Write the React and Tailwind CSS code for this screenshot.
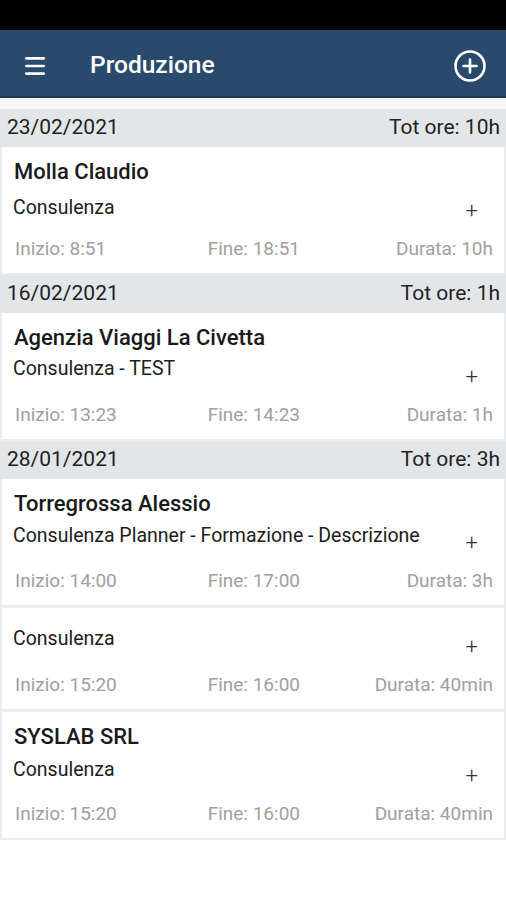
import { Menu } from "lucide-react";

const groups = [
  {
    date: "23/02/2021",
    tot: "10h",
    items: [
      { name: "Molla Claudio", desc: "Consulenza", start: "8:51", end: "18:51", dur: "10h", descGap: "mt-[14px]" },
    ],
  },
  {
    date: "16/02/2021",
    tot: "1h",
    items: [
      { name: "Agenzia Viaggi La Civetta", desc: "Consulenza - TEST", start: "13:23", end: "14:23", dur: "1h", descGap: "mt-[9px]" },
    ],
  },
  {
    date: "28/01/2021",
    tot: "3h",
    items: [
      { name: "Torregrossa Alessio", desc: "Consulenza Planner - Formazione - Descrizione", start: "14:00", end: "17:00", dur: "3h", descGap: "mt-[10px]" },
      { name: "", desc: "Consulenza", start: "15:20", end: "16:00", dur: "40min", descGap: "mt-[9px]" },
      { name: "SYSLAB SRL", desc: "Consulenza", start: "15:20", end: "16:00", dur: "40min", descGap: "mt-[11px]" },
    ],
  },
];

const Card = ({ item }) => (
  <div className="bg-white mx-[2px] pl-[12px] pr-[11px] pt-[12px] pb-[2px]">
    {item.name && (
      <div className="h-[25px] leading-[25px] text-[22px] font-medium text-[#1a1a1a]">{item.name}</div>
    )}
    <div className="h-[44px] flex justify-between items-start">
      <div className={`${item.descGap} -ml-[1px] leading-[20px] text-[19.5px] text-[#1c1c1c]`}>{item.desc}</div>
      <span className="mt-[17px] mr-[15px] leading-[20px] text-[22px] font-light text-[#333]">+</span>
    </div>
    <div className="h-[43px] grid grid-cols-3 items-center text-[19px] text-[#a0a0a0]">
      <span className="pl-[1px]">Inizio: {item.start}</span>
      <span className="pl-[34px]">Fine: {item.end}</span>
      <span className="text-right">Durata: {item.dur}</span>
    </div>
  </div>
);

export default function App() {
  return (
    <div className="w-[506px] h-[900px] bg-white overflow-hidden" style={{ fontFamily: "Roboto, 'Noto Sans', sans-serif" }}>
      <div className="h-[30px] bg-black" />
      <div className="h-[68px] pt-[5px] bg-[#294a6d] border-b-[2px] border-[#1d3a5a] flex items-center text-white">
        <Menu size={26} strokeWidth={2.5} className="ml-[22px]" />
        <span className="ml-[42px] text-[24.5px] font-medium">Produzione</span>
        <svg className="ml-auto mr-[19px]" width="34" height="34" viewBox="0 0 34 34" fill="none" stroke="white" strokeWidth="2.6" strokeLinecap="round">
          <circle cx="17" cy="17" r="14.5" />
          <path d="M17 10.5v13M10.5 17h13" />
        </svg>
      </div>
      <div className="h-[11px] bg-[#f8f8f8]" />
      <div className="bg-[#eaecee] pb-[2px] flex flex-col">
        {groups.map((g, gi) => (
          <div key={g.date} className={gi > 0 ? "mt-[2px]" : ""}>
            <div className="h-[38px] bg-[#e3e6e9] flex items-center justify-between pl-[7px] pr-[6px] text-[21px] text-[#222]">
              <span>{g.date}</span>
              <span>Tot ore: {g.tot}</span>
            </div>
            <div className="flex flex-col gap-[3px]">
              {g.items.map((it, i) => (
                <Card key={i} item={it} />
              ))}
            </div>
          </div>
        ))}
      </div>
    </div>
  );
}
